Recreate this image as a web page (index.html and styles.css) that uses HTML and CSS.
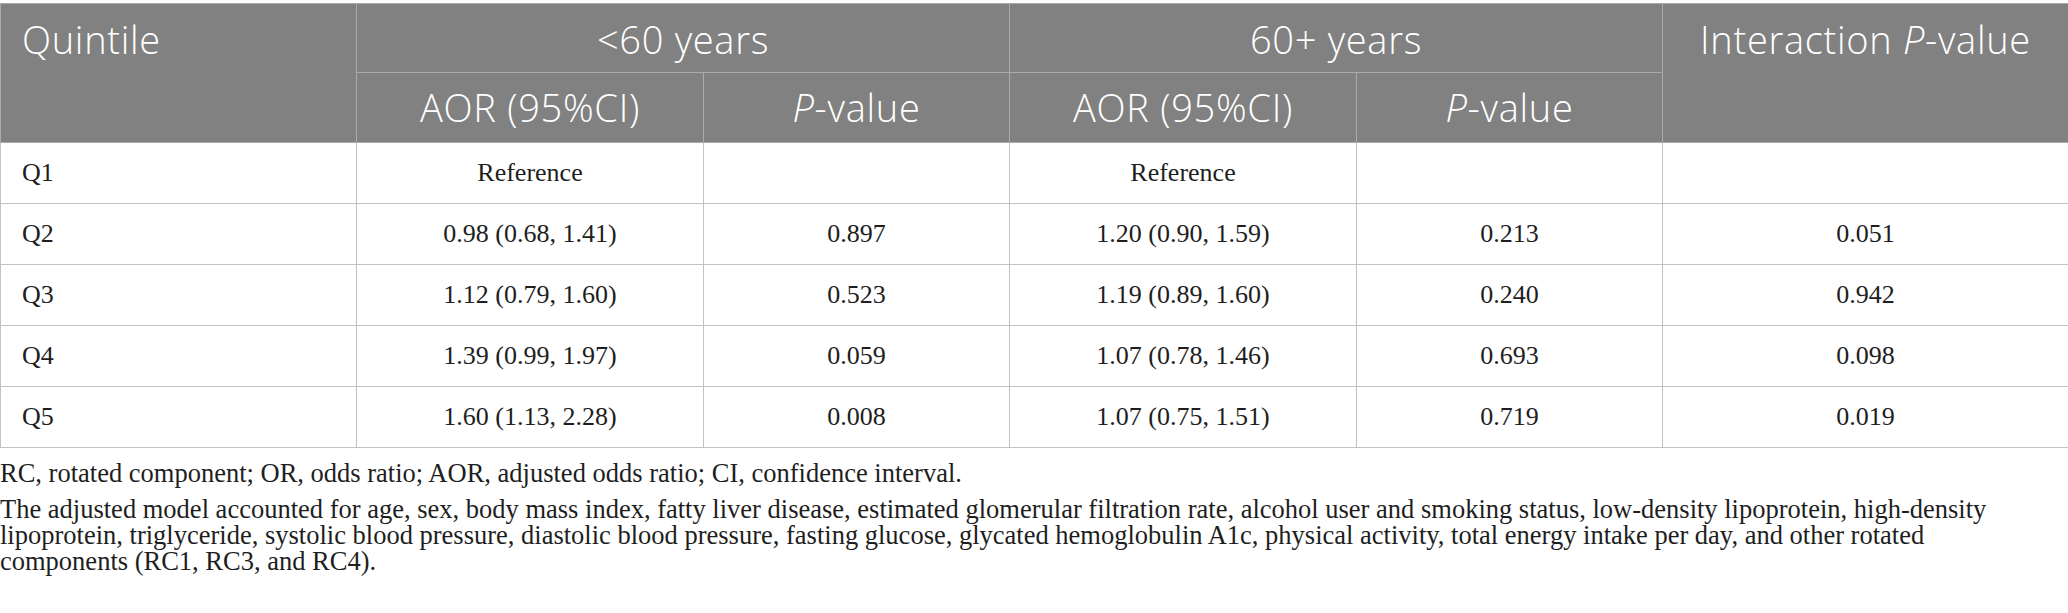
FILE: index.html
```html
<!DOCTYPE html>
<html lang="en">
<head>
<meta charset="utf-8">
<title>Quintile table</title>
<link rel="stylesheet" href="styles.css">
</head>
<body>
<div class="wrap">
<table class="data">
  <colgroup>
    <col class="c-q">
    <col class="c-aor">
    <col class="c-p">
    <col class="c-aor">
    <col class="c-p">
    <col class="c-int">
  </colgroup>
  <thead>
    <tr class="h1">
      <th rowspan="2" class="left">Quintile</th>
      <th colspan="2">&lt;60 years</th>
      <th colspan="2">60+ years</th>
      <th rowspan="2">Interaction <i>P</i>-value</th>
    </tr>
    <tr class="h2">
      <th>AOR (95%CI)</th>
      <th><i>P</i>-value</th>
      <th>AOR (95%CI)</th>
      <th><i>P</i>-value</th>
    </tr>
  </thead>
  <tbody>
    <tr><td class="left">Q1</td><td>Reference</td><td></td><td>Reference</td><td></td><td></td></tr>
    <tr><td class="left">Q2</td><td>0.98 (0.68, 1.41)</td><td>0.897</td><td>1.20 (0.90, 1.59)</td><td>0.213</td><td>0.051</td></tr>
    <tr><td class="left">Q3</td><td>1.12 (0.79, 1.60)</td><td>0.523</td><td>1.19 (0.89, 1.60)</td><td>0.240</td><td>0.942</td></tr>
    <tr><td class="left">Q4</td><td>1.39 (0.99, 1.97)</td><td>0.059</td><td>1.07 (0.78, 1.46)</td><td>0.693</td><td>0.098</td></tr>
    <tr><td class="left">Q5</td><td>1.60 (1.13, 2.28)</td><td>0.008</td><td>1.07 (0.75, 1.51)</td><td>0.719</td><td>0.019</td></tr>
  </tbody>
</table>
<div class="notes">
  <p>RC, rotated component; OR, odds ratio; AOR, adjusted odds ratio; CI, confidence interval.</p>
  <p>The adjusted model accounted for age, sex, body mass index, fatty liver disease, estimated glomerular filtration rate, alcohol user and smoking status, low-density lipoprotein, high-density lipoprotein, triglyceride, systolic blood pressure, diastolic blood pressure, fasting glucose, glycated hemoglobulin A1c, physical activity, total energy intake per day, and other rotated components (RC1, RC3, and RC4).</p>
</div>
</div>
</body>
</html>
```

FILE: styles.css
```css
html, body {
  margin: 0;
  padding: 0;
  background: #ffffff;
}

.wrap {
  padding-top: 3px;
  width: 2068px;
}

.data {
  border-collapse: collapse;
  table-layout: fixed;
  width: 2068px;
  font-family: "Liberation Serif", "Times New Roman", serif;
  font-size: 26px;
  color: #1e1e1e;
}

.c-q { width: 356px; }
.c-aor { width: 347px; }
.c-p { width: 306px; }
.c-int { width: 406px; }

.data th {
  background: #808180;
  color: #ffffff;
  font-family: "Open Sans", "Liberation Sans", sans-serif;
  font-weight: 300;
  font-size: 38px;
  letter-spacing: 0.7px;
  text-align: center;
  vertical-align: top;
  border: 1px solid #a9aaa9;
  padding: 11px 8px 0 8px;
  line-height: 48px;
}

.data th i {
  font-style: italic;
}

.data .h1 th {
  height: 57px;
}

.data .h2 th {
  height: 59px;
  padding-top: 10px;
}

.data th.left {
  text-align: left;
  padding-left: 21px;
}

.data td {
  border: 1px solid #c3c3c3;
  text-align: center;
  vertical-align: middle;
  height: 60px;
  padding: 0 10px;
  line-height: 30px;
}

.data td.left {
  text-align: left;
  padding-left: 21px;
}

.notes {
  font-family: "Liberation Serif", "Times New Roman", serif;
  font-size: 26.5px;
  color: #1e1e1e;
  padding: 12px 40px 0 0;
  line-height: 26px;
}

.notes p {
  margin: 0 0 10px 0;
}
```
